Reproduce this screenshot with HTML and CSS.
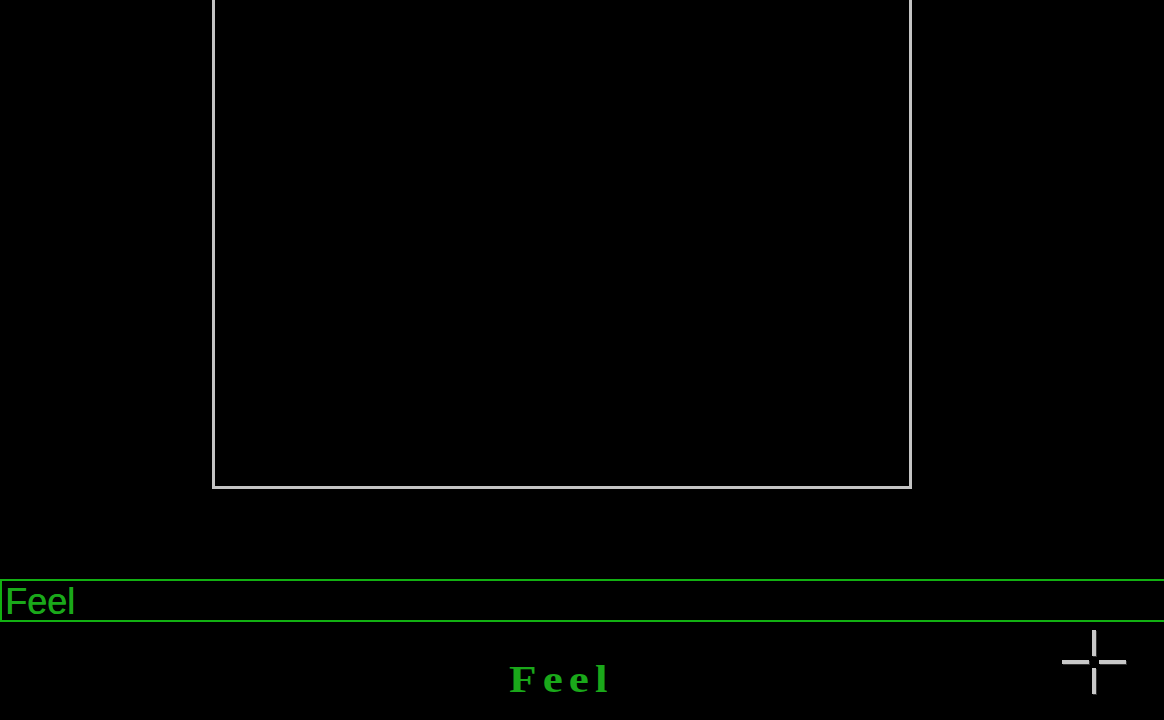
FILE: index.html
```html
<!DOCTYPE html>
<html>
<head>
<meta charset="utf-8">
<link rel="stylesheet" href="styles.css">
</head>
<body>
<div class="screen">
  <div class="frame"></div>
  <div class="entry"><span class="entry-text">Feel</span></div>
  <div class="status">
    <span class="word">Feel</span>
    <div class="cursor">
      <span class="bar v top"></span>
      <span class="bar v bottom"></span>
      <span class="bar h left"></span>
      <span class="bar h right"></span>
    </div>
  </div>
</div>
</body>
</html>
```
FILE: styles.css
```css
html, body {
  margin: 0;
  padding: 0;
  background: #000;
}
.screen {
  width: 1164px;
  height: 720px;
  overflow: hidden;
  background: #000;
  position: relative;
}
.frame {
  margin-top: -20px;
  margin-left: 212px;
  width: 700px;
  height: 509px;
  box-sizing: border-box;
  border: 3px solid #c4c4c4;
}
.entry {
  margin-top: 90px;
  width: 1200px;
  height: 43px;
  box-sizing: border-box;
  border: 2px solid #12b012;
  border-right: none;
  display: flex;
  align-items: center;
  padding-left: 3px;
}
.entry-text {
  font-family: "Liberation Sans", Arial, sans-serif;
  font-size: 36px;
  line-height: 38px;
  color: #1aa81a;
  letter-spacing: 0;
  padding-top: 3px;
  text-shadow: 0.5px 0 0 #1aa81a;
}
.status {
  position: relative;
  height: 99px;
  padding-left: 509px;
  padding-top: 40px;
  box-sizing: border-box;
}
.word {
  font-family: "Liberation Serif", "Times New Roman", serif;
  font-weight: bold;
  font-size: 37px;
  line-height: 36px;
  color: #1aa81a;
  letter-spacing: 5px;
  display: inline-block;
  transform: scaleX(1.22);
  transform-origin: left center;
}
.cursor {
  position: absolute;
  left: 1062px;
  top: 8px;
  width: 64px;
  height: 64px;
}
.bar {
  position: absolute;
  background: #c8c8c8;
  box-shadow: 1px 1px 0 #333;
}
.bar.v {
  left: 30px;
  width: 4px;
  height: 26px;
}
.bar.v.top { top: 0; }
.bar.v.bottom { top: 38px; }
.bar.h {
  top: 30px;
  height: 4px;
  width: 27px;
}
.bar.h.left { left: 0; }
.bar.h.right { left: 37px; }
```
